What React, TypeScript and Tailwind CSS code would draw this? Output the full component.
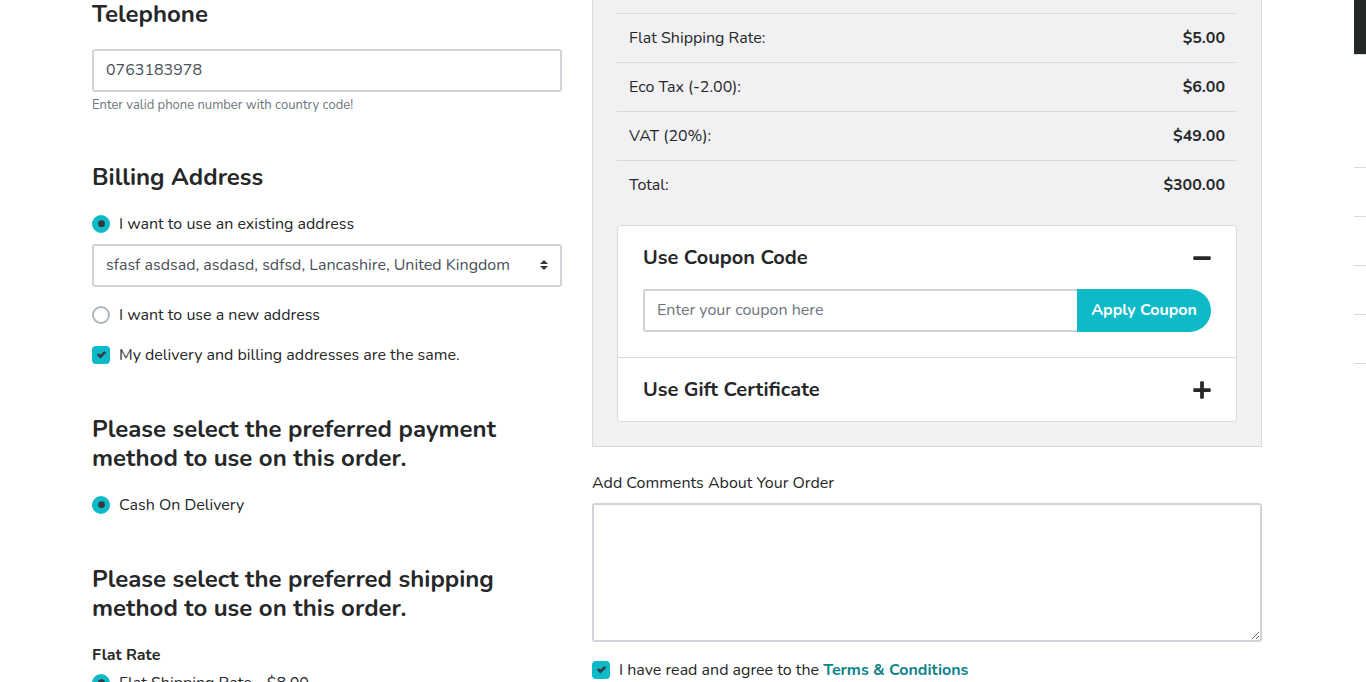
import { useState } from "react";
import type { InputHTMLAttributes, ReactNode } from "react";
import { FaMinus, FaPlus } from "react-icons/fa";

const totals = [
  { label: "Flat Shipping Rate:", value: "$5.00" },
  { label: "Eco Tax (-2.00):", value: "$6.00" },
  { label: "VAT (20%):", value: "$49.00" },
  { label: "Total:", value: "$300.00" },
];

const field = "rounded-[3px] border-2 border-[#ced4da] bg-white text-base text-[#495057] outline-none focus:border-[#0fbac8]";

type ChoiceProps = InputHTMLAttributes<HTMLInputElement> & { children: ReactNode };

function Choice({ children, type, ...rest }: ChoiceProps) {
  const shape = type === "radio" ? "rounded-full" : "rounded";
  return (
    <label className="flex items-center gap-[9px] leading-6">
      <span className="grid size-[18px] shrink-0 place-items-center">
        <input
          type={type}
          className={`peer col-start-1 row-start-1 size-[18px] appearance-none border-2 border-[#adb5bd] bg-white checked:border-[#0fbac8] checked:bg-[#0fbac8] ${shape}`}
          {...rest}
        />
        <svg
          viewBox="0 0 8 8"
          aria-hidden="true"
          className="pointer-events-none invisible col-start-1 row-start-1 size-2 overflow-visible fill-[#343a40] peer-checked:visible"
        >
          {type === "radio" ? (
            <circle cx="4.5" cy="3.7" r="3.4" />
          ) : (
            <path
              transform="translate(0.2 -0.6) scale(1.08)"
              strokeWidth="0.5"
              className="stroke-[#343a40]"
              d="M6.564.75l-3.59 3.612-1.538-1.55L0 4.26 2.974 7.25 8 2.193z"
            />
          )}
        </svg>
      </span>
      <span>{children}</span>
    </label>
  );
}

function Heading({ children }: { children: ReactNode }) {
  return <h2 className="mb-5 text-2xl/[29px] font-bold">{children}</h2>;
}

function PanelToggle({ label, open, onClick }: { label: string; open: boolean; onClick: () => void }) {
  const Icon = open ? FaMinus : FaPlus;
  return (
    <button
      type="button"
      aria-expanded={open}
      onClick={onClick}
      className="flex h-[63px] w-full items-center justify-between pt-0.5 pr-6 pl-[25px] text-xl font-bold"
    >
      {label}
      <Icon aria-hidden="true" className="size-5" />
    </button>
  );
}

function CustomerColumn() {
  const [address, setAddress] = useState("existing");
  return (
    <section className="w-5/12 px-[15px]">
      <Heading>
        <label htmlFor="telephone">Telephone</label>
      </Heading>
      <input id="telephone" type="tel" defaultValue="0763183978" className={`block h-[43px] w-full px-3 pb-0.5 ${field}`} />
      <p className="mt-[3px] text-[13px]/5 text-[#6c757d]">Enter valid phone number with country code!</p>

      <div className="mt-12">
        <Heading>Billing Address</Heading>
        <Choice type="radio" name="address" checked={address === "existing"} onChange={() => setAddress("existing")}>
          I want to use an existing address
        </Choice>
        <div className="mt-2 mb-4 grid items-center">
          <select
            aria-label="Existing address"
            className={`col-start-1 row-start-1 h-[43px] w-full appearance-none pr-8 pb-0.5 pl-3 ${field}`}
          >
            <option>sfasf asdsad, asdasd, sdfsd, Lancashire, United Kingdom</option>
          </select>
          <svg
            viewBox="0 0 8 10"
            aria-hidden="true"
            className="pointer-events-none col-start-1 row-start-1 mr-[14px] mb-px h-[10px] w-2 justify-self-end fill-[#343a40]"
          >
            <path d="M4 0L0 4h8zM0 6h8L4 10z" />
          </svg>
        </div>
        <Choice type="radio" name="address" checked={address === "new"} onChange={() => setAddress("new")}>
          I want to use a new address
        </Choice>
        <div className="mt-4">
          <Choice type="checkbox" defaultChecked>
            My delivery and billing addresses are the same.
          </Choice>
        </div>
      </div>

      <div className="mt-12">
        <Heading>Please select the preferred payment method to use on this order.</Heading>
        <Choice type="radio" name="payment" defaultChecked>
          Cash On Delivery
        </Choice>
      </div>

      <div className="mt-12">
        <Heading>Please select the preferred shipping method to use on this order.</Heading>
        <p className="mb-1 leading-6 font-bold">Flat Rate</p>
        <Choice type="radio" name="shipping" defaultChecked>
          Flat Shipping Rate - $8.00
        </Choice>
      </div>
    </section>
  );
}

function OrderColumn() {
  const [couponOpen, setCouponOpen] = useState(true);
  const [giftOpen, setGiftOpen] = useState(false);
  return (
    <section className="w-7/12 px-[15px]">
      <div className="border border-t-0 border-[#dadbdd] bg-[#f1f1f4] px-6 pt-[13px] pb-6">
        <table className="w-full">
          <tbody>
            {totals.map((row) => (
              <tr key={row.label} className="h-[49px] border-t border-[#dadbdd]">
                <th scope="row" className="px-3 text-left font-normal">
                  {row.label}
                </th>
                <td className="px-3 text-right font-bold">{row.value}</td>
              </tr>
            ))}
          </tbody>
        </table>

        <div className="mt-[15px] rounded border border-[#dadbdd] bg-white">
          <PanelToggle label="Use Coupon Code" open={couponOpen} onClick={() => setCouponOpen(!couponOpen)} />
          {couponOpen && (
            <form className="flex px-[25px] pb-[25px]" onSubmit={(event) => event.preventDefault()}>
              <input
                type="text"
                aria-label="Coupon code"
                placeholder="Enter your coupon here"
                className={`h-[43px] min-w-0 flex-1 rounded-r-none border-r-0 px-3 placeholder:text-[#6c757d] ${field}`}
              />
              <button
                type="submit"
                className="h-[43px] w-[134px] shrink-0 rounded-r-full bg-[#0fbac8] font-bold whitespace-nowrap text-white"
              >
                Apply Coupon
              </button>
            </form>
          )}
          <div className="border-t border-[#dadbdd]">
            <PanelToggle label="Use Gift Certificate" open={giftOpen} onClick={() => setGiftOpen(!giftOpen)} />
          </div>
        </div>
      </div>

      <label htmlFor="comments" className="mt-6 mb-2 block leading-6">
        Add Comments About Your Order
      </label>
      <textarea id="comments" className={`block h-[139px] w-full resize-y p-3 ${field}`} />
      <div className="mt-4">
        <Choice type="checkbox" defaultChecked>
          I have read and agree to the{" "}
          <a href="#terms" className="font-bold text-[#0b8389]">
            Terms &amp; Conditions
          </a>
        </Choice>
      </div>
    </section>
  );
}

function DrawerEdge() {
  return (
    <aside className="w-3 shrink-0">
      <div className="h-[54px] bg-[#252828]" />
      <div className="h-[113px] border-t border-[#dadbdd]" />
      {[0, 1, 2, 3, 4].map((row) => (
        <div key={row} className="h-[49px] border-t border-[#dadbdd]" />
      ))}
    </aside>
  );
}

export default function App() {
  return (
    <div className="flex h-screen overflow-hidden bg-white font-[Nunito,'Open_Sans',sans-serif] text-base text-[#252728]">
      <main className="min-w-0 flex-1">
        <div className="mx-auto flex max-w-[1200px]">
          <CustomerColumn />
          <OrderColumn />
        </div>
      </main>
      <DrawerEdge />
    </div>
  );
}
